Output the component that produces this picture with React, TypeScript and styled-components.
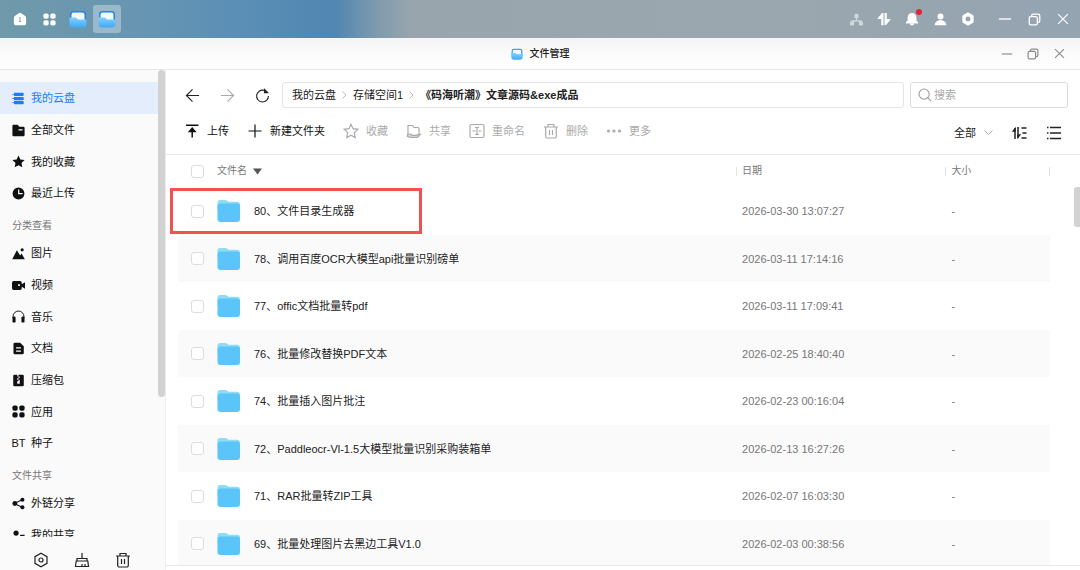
import React from "react";
import styled, { createGlobalStyle, css } from "styled-components";

const Global = createGlobalStyle`
  * { box-sizing: border-box; }
  html, body, #root { height: 100%; }
  body {
    margin: 0;
    overflow: hidden;
    font-family: "Liberation Sans", "Noto Sans CJK SC", sans-serif;
    font-size: 11px;
    line-height: 16px;
    color: #222;
    background: #fff;
  }
  button, input, select { font: inherit; color: inherit; }
  svg { display: block; flex: none; }
`;

const Desktop = styled.div`
  display: flex;
  flex-direction: column;
  height: 100vh;
  overflow: hidden;
`;

const SystemBar = styled.header`
  display: flex;
  align-items: center;
  justify-content: space-between;
  flex: none;
  height: 38px;
  padding: 0 3px 0 6px;
  color: #fff;
  background: linear-gradient(90deg, #7099aa 0%, #6896b2 12%, #5b8fb5 22%, #5086b2 31%, #7f9bae 35%, #98a5ac 38%, #9ba7ae 70%, #94a4b1 100%);
`;

const BarGroup = styled.div<{ $gap?: string }>`
  display: flex;
  align-items: center;
  gap: ${(p) => p.$gap ?? "0"};
`;

const BarButton = styled.button<{ $active?: boolean; $faded?: boolean }>`
  position: relative;
  display: flex;
  align-items: center;
  justify-content: center;
  width: 28px;
  height: 28px;
  padding: 0;
  border: 0;
  border-radius: 3px;
  color: #fff;
  opacity: ${(p) => (p.$faded ? 0.55 : 1)};
  background: ${(p) => (p.$active ? "rgba(255,255,255,0.33)" : "transparent")};
`;

const WindowButtons = styled(BarGroup)`
  margin-left: 9px;
`;

const Dot = styled.span`
  position: absolute;
  top: 4px;
  right: 4px;
  width: 6px;
  height: 6px;
  border-radius: 50%;
  background: #e32636;
`;

const TitleBar = styled.div`
  display: grid;
  grid-template-columns: 1fr auto 1fr;
  align-items: center;
  flex: none;
  height: 32px;
  padding: 0 8px;
  border-bottom: 1px solid #e8e8e8;
  background: linear-gradient(#f5f5f5, #fff);
`;

const Title = styled.h1`
  grid-column: 2;
  display: flex;
  align-items: center;
  gap: 7px;
  margin: 0;
  font-size: 10px;
  font-weight: 500;
`;

const TitleControls = styled.div`
  display: flex;
  justify-content: flex-end;
`;

const TitleButton = styled.button`
  display: flex;
  align-items: center;
  justify-content: center;
  width: 26px;
  height: 24px;
  padding: 0;
  border: 0;
  color: #8c8c8c;
  background: none;
`;

const Body = styled.div`
  display: flex;
  flex: 1;
  min-height: 0;
`;

const Sidebar = styled.aside`
  display: flex;
  flex-direction: column;
  flex: none;
  width: 166px;
  border-right: 1px solid #ececec;
  background: #fafafa;
`;

const NavScroll = styled.div`
  display: flex;
  flex: 1;
  min-height: 0;
  overflow: hidden;
`;

const Nav = styled.nav`
  flex: 1;
  padding-top: 12px;
`;

const NavList = styled.ul`
  margin: 0;
  padding: 0;
  list-style: none;
`;

const NavItem = styled.li`
  height: 32px;
  &:nth-child(3n) { height: 31px; }
`;

const NavLink = styled.a<{ $active?: boolean }>`
  display: flex;
  align-items: center;
  gap: 6px;
  height: 100%;
  padding-left: 12px;
  color: ${(p) => (p.$active ? "#1a80f5" : "#111")};
  background: ${(p) => (p.$active ? "#e3edfc" : "transparent")};
  text-decoration: none;
`;

const NavIcon = styled.span`
  display: flex;
  justify-content: center;
  flex: none;
  width: 13px;
`;

const NavHeading = styled.h2`
  display: flex;
  align-items: center;
  height: 28px;
  margin: 0;
  padding: 6px 0 0 12px;
  font-size: 10px;
  font-weight: 400;
  color: #777;
`;

const NavThumb = styled.div`
  flex: none;
  width: 7px;
  height: 70%;
  border-radius: 4px;
  background: #d2d2d2;
`;

const SideFooter = styled.div`
  display: flex;
  flex: none;
  gap: 23px;
  height: 33px;
  padding: 14px 0 0 32px;
`;

const IconButton = styled.button`
  display: flex;
  align-items: center;
  justify-content: center;
  width: 18px;
  height: 18px;
  padding: 0;
  border: 0;
  color: #222;
  background: none;
  &:disabled { color: #aaa; }
`;

const Main = styled.main`
  display: flex;
  flex-direction: column;
  flex: 1;
  min-width: 0;
  background: #fff;
`;

const AddressRow = styled.div`
  display: flex;
  align-items: center;
  flex: none;
  gap: 17px;
  padding: 12px 12px 0 17px;
`;

const AddressFields = styled.div`
  display: flex;
  flex: 1;
  gap: 6px;
  min-width: 0;
  margin-left: -6px;
`;

const Breadcrumb = styled.nav`
  display: flex;
  align-items: center;
  flex: 1;
  gap: 6px;
  height: 26px;
  padding: 0 9px;
  border: 1px solid #e4e4e4;
  border-radius: 3px;
`;

const Crumb = styled.a<{ $current?: boolean }>`
  color: #222;
  font-weight: ${(p) => (p.$current ? 700 : 400)};
  text-decoration: none;
`;

const SearchBox = styled.label`
  display: flex;
  align-items: center;
  flex: none;
  gap: 2px;
  width: 158px;
  height: 26px;
  padding: 0 7px;
  border: 1px solid #dcdcdc;
  border-radius: 3px;
  color: #999;
`;

const SearchInput = styled.input`
  flex: 1;
  min-width: 0;
  padding: 0;
  border: 0;
  outline: 0;
  background: none;
  &::placeholder { color: #aaa; opacity: 1; }
`;

const Toolbar = styled.div`
  display: flex;
  align-items: center;
  justify-content: space-between;
  flex: none;
  height: 47px;
  padding: 0 17px 0 18px;
  border-bottom: 1px solid #e8e8e8;
`;

const Actions = styled.div`
  display: flex;
  align-items: center;
  gap: 18px;
`;

const ActionButton = styled.button`
  display: flex;
  align-items: center;
  gap: 7px;
  padding: 0;
  border: 0;
  color: #111;
  background: none;
  white-space: nowrap;
  &:disabled { color: #aaa; }
`;

const ViewTools = styled.div`
  display: flex;
  align-items: center;
  gap: 17px;
  padding-top: 4px;
`;

const Filter = styled.label`
  display: flex;
  align-items: center;
  gap: 7px;
  color: #aaa;
`;

const FilterSelect = styled.select`
  appearance: none;
  width: 23px;
  padding: 0;
  border: 0;
  color: #222;
  background: none;
`;

const ListArea = styled.div`
  display: flex;
  justify-content: space-between;
  flex: 1;
  min-height: 0;
  overflow: hidden;
  padding-left: 12px;
`;

const FileTable = styled.table`
  flex: 1;
  align-self: flex-start;
  table-layout: fixed;
  border-collapse: collapse;
`;

const cell = css`
  padding: 0;
  text-align: left;
  font-weight: 400;
  color: #777;
`;

const HeadCell = styled.th<{ $width?: string }>`
  ${cell}
  width: ${(p) => p.$width ?? "auto"};
  height: 32px;
  font-size: 10px;
`;

const HeadLabel = styled.div<{ $divided?: boolean; $last?: boolean }>`
  display: flex;
  align-items: center;
  gap: 6px;
  height: 9px;
  padding-left: ${(p) => (p.$divided ? "5px" : "0")};
  border-left: ${(p) => (p.$divided ? "1px solid #e2e2e2" : "0")};
  border-right: ${(p) => (p.$last ? "1px solid #e2e2e2" : "0")};
`;

const Row = styled.tr`
  height: 48px;
  &:nth-child(even) { height: 47px; background: #fafafa; }
`;

const Cell = styled.td<{ $inset?: boolean }>`
  ${cell}
  padding-left: ${(p) => (p.$inset ? "6px" : "0")};
`;

const FileName = styled.label`
  display: flex;
  align-items: center;
  gap: 13px;
  color: #222;
`;

const Check = styled.input`
  appearance: none;
  display: block;
  width: 13px;
  height: 13px;
  margin: 0 0 0 13px;
  border: 1px solid #ddd;
  border-radius: 3px;
  background: #fff;
`;

const ListRail = styled.div`
  flex: none;
  width: 30px;
  padding: 32px 0 0 24px;
`;

const ListThumb = styled.div`
  height: 40px;
  border-radius: 3px 0 0 3px;
  background: #d2d2d2;
`;

const StatusEdge = styled.div`
  flex: none;
  height: 5px;
  border-top: 1px solid #e8e8e8;
`;

const Marker = styled.div`
  position: absolute;
  top: 188px;
  left: 170px;
  width: 252px;
  height: 46px;
  border: 3px solid #ee5253;
  pointer-events: none;
`;

type IconProps = { size?: number; children: React.ReactNode; line?: number };

const Solid = ({ size = 13, children }: IconProps) => (
  <svg width={size} height={size} viewBox="0 0 16 16" fill="currentColor" aria-hidden="true">{children}</svg>
);

const Line = ({ size = 16, children, line = 1.2 }: IconProps) => (
  <svg width={size} height={size} viewBox="0 0 16 16" fill="none" stroke="currentColor" strokeWidth={line} aria-hidden="true">{children}</svg>
);

const AppFolder = ({ size = 18 }: { size?: number }) => (
  <svg width={size} height={size} viewBox="0 0 18 18" aria-hidden="true">
    <defs>
      <linearGradient id="front" x1="0" y1="0" x2="0" y2="1">
        <stop offset="0" stopColor="#86cfff" />
        <stop offset="1" stopColor="#3fa9f9" />
      </linearGradient>
    </defs>
    <rect x="1" y="1" width="16" height="14" rx="3.500" fill="#2382dd" />
    <path d="M2.500 4.500a2 2 0 0 1 2-2h9a2 2 0 0 1 2 2V12h-13z" fill="#effaff" />
    <path d="M.5 7.500h5.700c1.800 0 1.800 2 3.600 2h7.700V14a3.500 3.500 0 0 1-3.500 3.500H4A3.500 3.500 0 0 1 .5 14z" fill="url(#front)" />
  </svg>
);

const FileFolder = () => (
  <svg width="24" height="24" viewBox="0 0 24 24" aria-hidden="true">
    <path d="M.5 3.500Q.5 1 3 1h5.200q1.200 0 2 .8l1.300 1H20q3 0 3 3v6H.5z" fill="#8edcf5" />
    <rect x=".5" y="4.500" width="22.500" height="18.500" rx="3" fill="#5bc5fa" />
  </svg>
);

const Minimize = ({ size = 14 }) => <Line size={size} line={1.5}><path d="M1 8h14" /></Line>;
const Restore = ({ size = 13 }) => <Line size={size} line={1.6}><rect x="1.500" y="4.500" width="10" height="10" rx="2" /><path d="M4.500 4V3.500a2 2 0 0 1 2-2h6a2 2 0 0 1 2 2v6a2 2 0 0 1-2 2H12" /></Line>;
const Close = ({ size = 12 }) => <Line size={size} line={1.6}><path d="m1.500 1.500 13 13M14.500 1.500l-13 13" /></Line>;

const icons = {
  disk: <Solid><path d="M2.500 1H13a1.500 1.500 0 0 1 1.500 1.500v1A1.500 1.500 0 0 1 13 5H2.500zM2.500 6H13a1.500 1.500 0 0 1 1.500 1.500v1A1.500 1.500 0 0 1 13 10H2.500zM2.500 11H13a1.500 1.500 0 0 1 1.500 1.500v1A1.500 1.500 0 0 1 13 15H2.500z" /><path d="M.5 2.500h3v1h-3zM.5 7.500h3v1h-3zM.5 12.500h3v1h-3z" /></Solid>,
  file: <Solid><path fillRule="evenodd" d="M2 1h5l2 2.500h5A1.500 1.500 0 0 1 15.500 5v8.500A1.500 1.500 0 0 1 14 15H2a1.500 1.500 0 0 1-1.500-1.500v-11A1.500 1.500 0 0 1 2 1zm6 5.500v1.500h5V6.500z" /></Solid>,
  star: <Solid><path d="m8 .5 2.300 4.900 5.200.7-3.800 3.700 1 5.400L8 12.600l-4.700 2.600 1-5.400L.5 6.100l5.200-.7z" /></Solid>,
  clock: <Solid><path fillRule="evenodd" d="M8 .7a7.300 7.300 0 1 1 0 14.600A7.300 7.300 0 0 1 8 .7zM7.500 3v6H13V7.500H9V3z" /></Solid>,
  image: <Solid><path d="M.3 15 6 4l4 6.500L11.800 8l4 7z" /><circle cx="12.500" cy="3.500" r="1.900" /></Solid>,
  video: <Solid><path fillRule="evenodd" d="M2 2.500h8a2 2 0 0 1 2 2v2L16 4v8l-4-2.500v2a2 2 0 0 1-2 2H2a2 2 0 0 1-2-2v-7a2 2 0 0 1 2-2zm5.500 4v2.200h2.200V6.500z" /></Solid>,
  music: <Solid><path d="M1.300 10V8a6.700 6.700 0 0 1 13.400 0v2" fill="none" stroke="currentColor" strokeWidth="1.200" /><rect x=".6" y="8" width="3.800" height="7.500" rx="1.500" /><rect x="11.600" y="8" width="3.800" height="7.500" rx="1.500" /></Solid>,
  doc: <Solid><path fillRule="evenodd" d="M3.500.8H10l4.500 4.500v8.200a1.700 1.700 0 0 1-1.700 1.700H3.500a1.700 1.700 0 0 1-1.700-1.700v-11A1.700 1.700 0 0 1 3.500.8zM5 6.500V8h6V6.500zm0 4V12h6v-1.500z" /></Solid>,
  zip: <Solid><path fillRule="evenodd" d="M3 1h3.500v2H8V1h5a1.500 1.500 0 0 1 1.500 1.500v11A1.500 1.500 0 0 1 13 15H3a1.500 1.500 0 0 1-1.500-1.500v-11A1.500 1.500 0 0 1 3 1zm5 2v2h1.500V3zM6.500 5v2H8V5zM8 7v1.500H6.500V12h3V7z" /></Solid>,
  apps: <Solid><rect x=".5" y=".5" width="6.500" height="6.500" rx="2.200" /><rect x="9" y=".5" width="6.500" height="6.500" rx="2.200" /><rect x=".5" y="9" width="6.500" height="6.500" rx="2.200" /><rect x="9" y="9" width="6.500" height="6.500" rx="2.200" /></Solid>,
  link: <Solid><path d="M13 3 3 8l10 5" fill="none" stroke="currentColor" strokeWidth="1.300" /><circle cx="3.500" cy="8" r="3" /><circle cx="12.800" cy="3.300" r="2.500" /><circle cx="12.800" cy="12.700" r="2.500" /></Solid>,
  shared: <Solid><circle cx="5" cy="5" r="3.200" /><path d="M.5 15a4.500 4.500 0 0 1 9 0zM10 7h5.500v1.600H10zM10 11h5.500v1.600H10z" /></Solid>,
  bt: <>BT</>,
};

type NavEntry = { icon: keyof typeof icons; label: string; active?: boolean };

const places: NavEntry[] = [
  { icon: "disk", label: "我的云盘", active: true },
  { icon: "file", label: "全部文件" },
  { icon: "star", label: "我的收藏" },
  { icon: "clock", label: "最近上传" },
];

const categories: NavEntry[] = [
  { icon: "image", label: "图片" },
  { icon: "video", label: "视频" },
  { icon: "music", label: "音乐" },
  { icon: "doc", label: "文档" },
  { icon: "zip", label: "压缩包" },
  { icon: "apps", label: "应用" },
  { icon: "bt", label: "种子" },
];

const shares: NavEntry[] = [
  { icon: "link", label: "外链分享" },
  { icon: "shared", label: "我的共享" },
];

const files = [
  ["80、文件目录生成器", "2026-03-30 13:07:27"],
  ["78、调用百度OCR大模型api批量识别磅单", "2026-03-11 17:14:16"],
  ["77、offic文档批量转pdf", "2026-03-11 17:09:41"],
  ["76、批量修改替换PDF文本", "2026-02-25 18:40:40"],
  ["74、批量插入图片批注", "2026-02-23 00:16:04"],
  ["72、Paddleocr-Vl-1.5大模型批量识别采购装箱单", "2026-02-13 16:27:26"],
  ["71、RAR批量转ZIP工具", "2026-02-07 16:03:30"],
  ["69、批量处理图片去黑边工具V1.0", "2026-02-03 00:38:56"],
];

const Entries = ({ items }: { items: NavEntry[] }) => (
  <NavList>
    {items.map((item) => (
      <NavItem key={item.label}>
        <NavLink href="#" $active={item.active}>
          <NavIcon>{icons[item.icon]}</NavIcon>
          {item.label}
        </NavLink>
      </NavItem>
    ))}
  </NavList>
);

const Separator = () => (
  <svg width="5" height="8" viewBox="0 0 5 8" fill="none" stroke="#bbb" aria-hidden="true"><path d="m.5.5 3.500 3.500L.5 7.500" /></svg>
);

const Trash = () => (
  <Line><path d="M1 4h14M5 4V1.500h6V4M2.700 4v9.500a1.500 1.500 0 0 0 1.500 1.500h7.600a1.500 1.500 0 0 0 1.500-1.500V4M6.500 7v5M9.500 7v5" /></Line>
);

export default function App() {
  return (
    <Desktop>
      <Global />
      <SystemBar>
        <BarGroup $gap="1px">
          <BarButton aria-label="主页"><Solid size={14}><path fillRule="evenodd" d="M8 1q.8 0 1.500.5L14 4.700q1 .7 1 2V13a2 2 0 0 1-2 2H3a2 2 0 0 1-2-2V6.700q0-1.300 1-2l4.500-3.200Q7.200 1 8 1zM7 6v1h.5v3.500H7v1h2v-1h-.5V6z" /></Solid></BarButton>
          <BarButton aria-label="应用">{icons.apps}</BarButton>
          <BarButton aria-label="文件夹"><AppFolder /></BarButton>
          <BarButton aria-label="文件管理" $active><AppFolder /></BarButton>
        </BarGroup>
        <BarGroup>
          <BarButton aria-label="网络" $faded><Solid><rect x="5.500" y="1" width="5" height="5.500" rx="1.500" /><rect x="0" y="10" width="5" height="5.500" rx="1.500" /><rect x="11" y="10" width="5" height="5.500" rx="1.500" /><path d="M7.200 6h1.600v3H14v2h-1.500l-4.500-.5-4.500.5H2V9h5.200z" /></Solid></BarButton>
          <BarButton aria-label="传输"><Solid size={14}><path d="M7.400 1v14H4.800V8H1.500q-1.400 0-.5-1.200L5.500 1.500Q6 1 6.500 1zM8.600 15V1h2.600v7h3.300q1.400 0 .5 1.200l-4.500 5.300q-.5.500-1 .5z" /></Solid></BarButton>
          <BarButton aria-label="通知"><Solid size={14}><path d="M8 1a5 5 0 0 1 5 5v3.500l2 2.500v1H1v-1l2-2.500V6a5 5 0 0 1 5-5zM5.500 13.500h5a2.500 2 0 0 1-5 0z" /></Solid><Dot /></BarButton>
          <BarButton aria-label="用户"><Solid><circle cx="8" cy="4.300" r="3.700" /><path d="M.8 15a7.200 6.300 0 0 1 14.400 0z" /></Solid></BarButton>
          <BarButton aria-label="设置"><Solid size={14}><path fillRule="evenodd" d="M7 .8q1-.5 2 0l4.500 2.600q1 .6 1 1.700v5.800q0 1.100-1 1.700L9 15.200q-1 .5-2 0l-4.500-2.600q-1-.6-1-1.700V5.100q0-1.100 1-1.700zM8 5.200a2.800 2.800 0 1 0 0 5.600 2.800 2.800 0 0 0 0-5.600z" /></Solid></BarButton>
          <WindowButtons $gap="1px">
            <BarButton aria-label="最小化"><Minimize /></BarButton>
            <BarButton aria-label="还原"><Restore /></BarButton>
            <BarButton aria-label="关闭"><Close /></BarButton>
          </WindowButtons>
        </BarGroup>
      </SystemBar>

      <TitleBar>
        <Title><AppFolder size={12} />文件管理</Title>
        <TitleControls>
          <TitleButton aria-label="最小化"><Minimize size={12} /></TitleButton>
          <TitleButton aria-label="还原"><Restore size={12} /></TitleButton>
          <TitleButton aria-label="关闭"><Close size={11} /></TitleButton>
        </TitleControls>
      </TitleBar>

      <Body>
        <Sidebar>
          <NavScroll>
            <Nav>
              <Entries items={places} />
              <NavHeading>分类查看</NavHeading>
              <Entries items={categories} />
              <NavHeading>文件共享</NavHeading>
              <Entries items={shares} />
            </Nav>
            <NavThumb />
          </NavScroll>
          <SideFooter>
            <IconButton aria-label="设置"><Line><path d="M8 1.300 14 4.700v6.600L8 14.700 2 11.300V4.700z" /><circle cx="8" cy="8" r="2" /></Line></IconButton>
            <IconButton aria-label="清理"><Line><path d="M8 1v5M3 9V6.500h10V9M1.500 14.500 2.200 9h11.600l.7 5.500zM8 14.500V12M11 14.500V12" /></Line></IconButton>
            <IconButton aria-label="回收站"><Trash /></IconButton>
          </SideFooter>
        </Sidebar>

        <Main>
          <AddressRow>
            <IconButton aria-label="后退"><Line size={15}><path d="M15 8H1.500M8 1.500 1.500 8 8 14.500" /></Line></IconButton>
            <IconButton aria-label="前进" disabled><Line size={15}><path d="M1 8h13.500M8 1.500 14.500 8 8 14.500" /></Line></IconButton>
            <IconButton aria-label="刷新"><Line size={15}><path d="M14.300 8.500A6.300 6.300 0 1 1 9.500 2.500" /><path d="M9.500 0v5.500H14q.8 0 .3-.8z" fill="currentColor" stroke="none" /></Line></IconButton>
            <AddressFields>
              <Breadcrumb aria-label="路径">
                <Crumb href="#">我的云盘</Crumb>
                <Separator />
                <Crumb href="#">存储空间1</Crumb>
                <Separator />
                <Crumb href="#" $current>《码海听潮》文章源码&amp;exe成品</Crumb>
              </Breadcrumb>
              <SearchBox>
                <Line size={14}><circle cx="7" cy="7" r="5.800" /><path d="m11 11 4 4" /></Line>
                <SearchInput type="search" placeholder="搜索" aria-label="搜索" />
              </SearchBox>
            </AddressFields>
          </AddressRow>

          <Toolbar>
            <Actions>
              <ActionButton><Line line={1.5}><path d="M2 2.200h12.500M8.200 14.500V6" /><path d="M3.800 9.200 8.200 4l4.400 5.200z" fill="currentColor" stroke="none" /></Line>上传</ActionButton>
              <ActionButton><Line><path d="M8 1.500v13M1.500 8h13" /></Line>新建文件夹</ActionButton>
              <ActionButton disabled><Line><path d="m8 1.300 2 4.400 4.800.6-3.500 3.300.9 4.900L8 12.200l-4.200 2.300.9-4.900L1.200 6.300 6 5.700z" /></Line>收藏</ActionButton>
              <ActionButton disabled><Line><path d="M2 10.500v-8h4.500L8 4.500h4q1 0 1 1v4.500" /><path d="M1.500 11h3l2 1.300h4l2.500-1.500 1.500.4-3 3.300H4.500l-3-1z" fill="currentColor" fillOpacity=".5" /></Line>共享</ActionButton>
              <ActionButton disabled><Line><rect x="1" y="1.500" width="14" height="13" rx="1.500" /><path d="M3.500 8h3M9.500 8h3M8 4.500v7M6 4.500h4M6 11.500h4" /></Line>重命名</ActionButton>
              <ActionButton disabled><Trash />删除</ActionButton>
              <ActionButton disabled><Solid size={16}><circle cx="2.500" cy="8" r="1.600" /><circle cx="8" cy="8" r="1.600" /><circle cx="13.500" cy="8" r="1.600" /></Solid>更多</ActionButton>
            </Actions>
            <ViewTools>
              <Filter>
                <FilterSelect aria-label="筛选"><option>全部</option></FilterSelect>
                <svg width="9" height="6" viewBox="0 0 9 6" fill="none" stroke="currentColor" aria-hidden="true"><path d="m.5.5 4 4 4-4" /></svg>
              </Filter>
              <IconButton aria-label="排序"><Line line={1.5}><path d="M4 14V3M7 2v11M10.500 3H15.500M11.500 8h4M10.500 13h5" /><path d="M4.700 1.800v5H.8zM6.300 14.200v-5h3.900z" fill="currentColor" stroke="none" /></Line></IconButton>
              <IconButton aria-label="列表视图"><Line line={1.6}><path d="M4 2.500h11M4 8h11M4 13.500h11M1 2.500h1.500M1 8h1.500M1 13.500h1.500" /></Line></IconButton>
            </ViewTools>
          </Toolbar>

          <ListArea>
            <FileTable>
              <thead>
                <tr>
                  <HeadCell $width="39px"><Check type="checkbox" aria-label="全选" /></HeadCell>
                  <HeadCell><HeadLabel>文件名<svg width="9" height="7" viewBox="0 0 9 7" fill="#555" aria-hidden="true"><path d="M0 .5h9L4.500 6.500z" /></svg></HeadLabel></HeadCell>
                  <HeadCell $width="24%"><HeadLabel $divided>日期</HeadLabel></HeadCell>
                  <HeadCell $width="12%"><HeadLabel $divided $last>大小</HeadLabel></HeadCell>
                </tr>
              </thead>
              <tbody>
                {files.map(([name, date], i) => (
                  <Row key={name}>
                    <Cell><Check type="checkbox" id={`file-${i}`} /></Cell>
                    <Cell><FileName htmlFor={`file-${i}`}><FileFolder />{name}</FileName></Cell>
                    <Cell $inset>{date}</Cell>
                    <Cell $inset>-</Cell>
                  </Row>
                ))}
              </tbody>
            </FileTable>
            <ListRail><ListThumb /></ListRail>
          </ListArea>
          <StatusEdge />
        </Main>
      </Body>
      <Marker />
    </Desktop>
  );
}
